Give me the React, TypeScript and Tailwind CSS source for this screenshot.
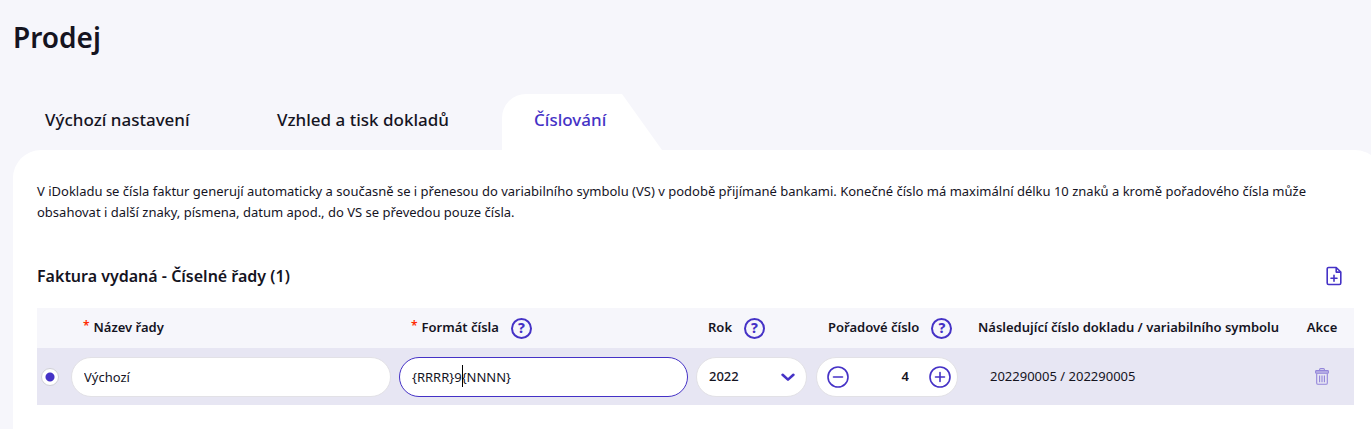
import React, { useState } from 'react';

import cn from 'clsx';

type IconProps = {
  readonly className?: string;
};

type Tab = {
  readonly label: string;
  readonly width: string;
};

const tabs: Tab[] = [
  { label: 'Výchozí nastavení', width: 'w-[232px]' },
  { label: 'Vzhled a tisk dokladů', width: 'w-[257px]' },
  { label: 'Číslování', width: 'w-[160px]' },
];

const fieldClass = 'h-10 w-full rounded-full border bg-white text-[13px] outline-none';

/*------------------*/
/*      ICONS       */
/*------------------*/
const ChevronIcon: React.FC<IconProps> = ({ className }) => (
  <svg className={className} viewBox="0 0 14 9" fill="none" stroke="currentColor" strokeWidth="2.6" aria-hidden="true">
    <path d="M1.6 1.8 7 6.6l5.4-4.8" strokeLinecap="round" strokeLinejoin="round" />
  </svg>
);

const MinusIcon: React.FC<IconProps> = ({ className }) => (
  <svg className={className} viewBox="0 0 22 22" fill="none" stroke="currentColor" strokeWidth="1.6" aria-hidden="true">
    <circle cx="11" cy="11" r="10" />
    <path d="M6.5 11h9" strokeLinecap="round" />
  </svg>
);

const PlusIcon: React.FC<IconProps> = ({ className }) => (
  <svg className={className} viewBox="0 0 22 22" fill="none" stroke="currentColor" strokeWidth="1.6" aria-hidden="true">
    <circle cx="11" cy="11" r="10" />
    <path d="M6.5 11h9M11 6.5v9" strokeLinecap="round" />
  </svg>
);

const AddFileIcon: React.FC<IconProps> = ({ className }) => (
  <svg className={className} viewBox="0 0 16 20" fill="none" stroke="currentColor" strokeWidth="1.6" aria-hidden="true">
    <path
      d="M10.2 1.5H2.6a1.4 1.4 0 0 0-1.4 1.4v14.2a1.4 1.4 0 0 0 1.4 1.4h10.8a1.4 1.4 0 0 0 1.4-1.4V6L10.2 1.5Z"
      strokeLinejoin="round"
    />
    <path d="M10.2 1.8v4.3h4.4" strokeLinejoin="round" />
    <path d="M5 12.3h6M8 9.3v6" strokeLinecap="round" />
  </svg>
);

const TrashIcon: React.FC<IconProps> = ({ className }) => (
  <svg className={className} viewBox="0 0 14 17" fill="none" stroke="currentColor" strokeWidth="1.1" aria-hidden="true">
    <path d="M4.6 2.4V1.6c0-.6.4-1 1-1h2.8c.6 0 1 .4 1 1v.8" />
    <rect x="0.6" y="2.6" width="12.8" height="2.6" rx="0.8" fill="currentColor" fillOpacity="0.5" />
    <path d="M1.7 5.4v9.5c0 .8.6 1.4 1.4 1.4h7.8c.8 0 1.4-.6 1.4-1.4V5.4" />
    <path d="M4.6 7.4v6.8M7 7.4v6.8M9.4 7.4v6.8" />
  </svg>
);

const HelpButton: React.FC<{ readonly label: string }> = ({ label }) => (
  <button
    type="button"
    aria-label={label}
    className="flex size-[21px] shrink-0 items-center justify-center rounded-full border-2 border-[#4532c6] text-sm leading-none font-extrabold text-[#4532c6]"
  >
    ?
  </button>
);

const Required: React.FC = () => <span className="mr-1 self-start text-xs leading-4 text-[#ff2a00]">*</span>;

const App: React.FC = () => {
  const [activeTab, setActiveTab] = useState(2);
  const [name, setName] = useState('Výchozí');
  const [format, setFormat] = useState('{RRRR}9{NNNN}');
  const [year, setYear] = useState('2022');
  const [order, setOrder] = useState(4);

  return (
    <div className="min-h-screen overflow-hidden bg-[#f6f6fb] pt-4 pl-[13px] font-['Noto_Sans',sans-serif] text-[#15141f]">
      <h1 className="text-[28px] leading-[42px] font-semibold">Prodej</h1>

      <div className="mt-9 flex" role="tablist">
        {tabs.map((tab, index) => (
          <button
            key={tab.label}
            type="button"
            role="tab"
            aria-selected={index === activeTab}
            onClick={() => setActiveTab(index)}
            className={cn(
              'h-14 shrink-0 pb-1 pl-8 text-left text-[17px] font-medium whitespace-nowrap',
              tab.width,
              index === activeTab &&
                'rounded-tl-3xl bg-white text-[#4532c6] [clip-path:polygon(0_0,calc(100%-40px)_0,100%_100%,0_100%)]',
            )}
          >
            {tab.label}
          </button>
        ))}
      </div>

      <main className="-mr-3 min-h-[279px] rounded-t-[28px] bg-white pt-[31px] pr-[29px] pl-6">
        <p className="max-w-[1270px] text-[13px] leading-[21px]">
          V iDokladu se čísla faktur generují automaticky a současně se i přenesou do variabilního symbolu (VS) v podobě
          přijímané bankami. Konečné číslo má maximální délku 10 znaků a kromě pořadového čísla může obsahovat i další
          znaky, písmena, datum apod., do VS se převedou pouze čísla.
        </p>

        <div className="mt-[41px] flex items-center justify-between pr-3">
          <h2 className="text-base leading-6 font-semibold">Faktura vydaná - Číselné řady (1)</h2>
          <button type="button" aria-label="Přidat číselnou řadu" className="text-[#4532c6]">
            <AddFileIcon className="h-5 w-4" />
          </button>
        </div>

        <table className="mt-5 w-full table-fixed text-left text-[13px]">
          <colgroup>
            <col className="w-[34px]" />
            <col />
            <col className="w-[297px]" />
            <col className="w-[120px]" />
            <col className="w-[150px]" />
            <col className="w-[324px]" />
            <col className="w-[64px]" />
          </colgroup>
          <thead className="bg-[#f6f6fb]">
            <tr className="h-10 whitespace-nowrap">
              <th aria-label="Výběr" />
              <th className="p-0 pl-3 font-semibold">
                <div className="flex items-center">
                  <Required />
                  Název řady
                </div>
              </th>
              <th className="p-0 pl-3 font-semibold">
                <div className="flex items-center">
                  <Required />
                  <span className="mr-3">Formát čísla</span>
                  <HelpButton label="Nápověda k formátu čísla" />
                </div>
              </th>
              <th className="p-0 pl-3 font-semibold">
                <div className="flex items-center gap-3">
                  Rok
                  <HelpButton label="Nápověda k roku" />
                </div>
              </th>
              <th className="p-0 pl-3 font-semibold">
                <div className="flex items-center gap-3">
                  Pořadové číslo
                  <HelpButton label="Nápověda k pořadovému číslu" />
                </div>
              </th>
              <th className="p-0 pl-3 font-semibold">Následující číslo dokladu / variabilního symbolu</th>
              <th className="p-0 text-center font-semibold">Akce</th>
            </tr>
          </thead>
          <tbody className="bg-[#e7e6f3]">
            <tr className="h-[57px]">
              <td className="p-0 pl-1">
                <input
                  type="radio"
                  name="series"
                  aria-label="Výchozí řada"
                  defaultChecked
                  className="block size-[18px] appearance-none rounded-full border border-[#cfcfd6] bg-white checked:bg-[radial-gradient(circle,#4532c6_4px,white_5px)]"
                />
              </td>
              <td className="p-0 pr-2">
                <input
                  type="text"
                  aria-label="Název řady"
                  value={name}
                  onChange={(e) => setName(e.target.value)}
                  className={cn(fieldClass, 'border-[#e2e1e6] px-3')}
                />
              </td>
              <td className="p-0 pr-2">
                <div className="relative">
                  <input
                    type="text"
                    aria-label="Formát čísla"
                    value={format}
                    onChange={(e) => setFormat(e.target.value)}
                    className={cn(fieldClass, 'border-[#4532c6] px-3')}
                  />
                  <span className="pointer-events-none absolute top-2 left-[63px] h-[22px] w-px bg-black" />
                </div>
              </td>
              <td className="p-0 pr-[9px]">
                <div className="relative">
                  <select
                    aria-label="Rok"
                    value={year}
                    onChange={(e) => setYear(e.target.value)}
                    className={cn(fieldClass, 'appearance-none border-[#e2e1e6] px-3 font-medium')}
                  >
                    <option>2021</option>
                    <option>2022</option>
                    <option>2023</option>
                  </select>
                  <ChevronIcon className="pointer-events-none absolute top-4 right-3 h-[9px] w-3.5 text-[#4532c6]" />
                </div>
              </td>
              <td className="p-0 pr-2">
                <div className={cn(fieldClass, 'flex items-center border-[#e2e1e6] pr-1.5 pl-2.5 text-[#4532c6]')}>
                  <button type="button" aria-label="Snížit" onClick={() => setOrder(order - 1)}>
                    <MinusIcon className="size-[22px]" />
                  </button>
                  <input
                    type="text"
                    inputMode="numeric"
                    aria-label="Pořadové číslo"
                    value={order}
                    onChange={(e) => setOrder(Number(e.target.value) || 0)}
                    className="w-0 min-w-0 grow pr-5 text-right font-semibold text-[#15141f] outline-none"
                  />
                  <button type="button" aria-label="Zvýšit" onClick={() => setOrder(order + 1)}>
                    <PlusIcon className="size-[22px]" />
                  </button>
                </div>
              </td>
              <td className="p-0 pl-6">202290005 / 202290005</td>
              <td className="p-0">
                <button type="button" aria-label="Smazat" className="mx-auto block text-[#9385da]">
                  <TrashIcon className="h-[17px] w-3.5" />
                </button>
              </td>
            </tr>
          </tbody>
        </table>
      </main>
    </div>
  );
};

export default App;
